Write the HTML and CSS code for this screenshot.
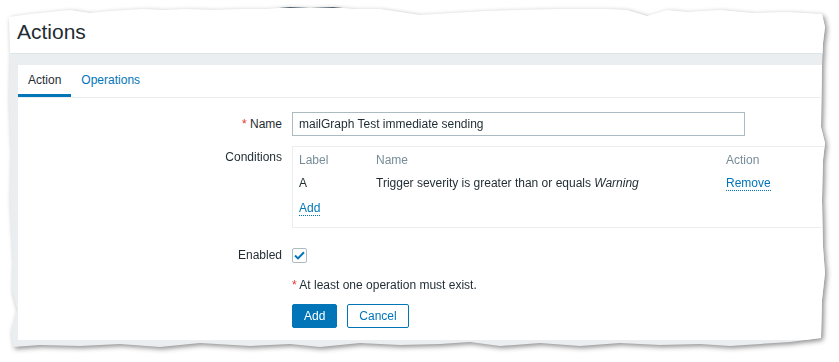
FILE: index.html
```html
<!DOCTYPE html>
<html>

<head>
    <title>Actions</title>
    <link rel="stylesheet" href="styles.css">
</head>

<body>
    <div class="shadow">
        <div class="sheet">
            <div class="topline"></div>
            <header class="header">
                <h1>Actions</h1>
            </header>

            <div class="wrapper">
                <div class="panel">
                    <ul class="tabs">
                        <li class="tab active">Action</li>
                        <li class="tab">Operations</li>
                    </ul>

                    <div class="form-grid">
                        <label class="lbl"><span class="req">*</span> Name</label>
                        <div class="field">
                            <input type="text" class="text-input" value="mailGraph Test immediate sending">
                        </div>

                        <label class="lbl lbl-top">Conditions</label>
                        <div class="field">
                            <div class="cond-box">
                                <table class="cond-table">
                                    <thead>
                                        <tr>
                                            <th class="col-label">Label</th>
                                            <th class="col-name">Name</th>
                                            <th>Action</th>
                                        </tr>
                                    </thead>
                                    <tbody>
                                        <tr>
                                            <td>A</td>
                                            <td>Trigger severity is greater than or equals <em>Warning</em></td>
                                            <td><a class="link">Remove</a></td>
                                        </tr>
                                    </tbody>
                                </table>
                                <div class="add-row"><a class="link">Add</a></div>
                            </div>
                        </div>

                        <label class="lbl row-enabled">Enabled</label>
                        <div class="field row-enabled">
                            <span class="checkbox">
                                <svg width="11" height="9" viewBox="0 0 11 9">
                                    <path d="M1 4.6 L4 7.4 L10 1.2" fill="none" stroke="#0275b8" stroke-width="2"/>
                                </svg>
                            </span>
                        </div>

                        <div></div>
                        <div class="field note"><span class="req">*</span> At least one operation must exist.</div>

                        <div></div>
                        <div class="field buttons">
                            <button class="btn">Add</button>
                            <button class="btn btn-alt">Cancel</button>
                        </div>
                    </div>
                </div>
            </div>
        </div>
    </div>
</body>

</html>
```

FILE: styles.css
```css
body {
    margin: 0;
    background: #ffffff;
    font-family: "Liberation Sans", Arial, sans-serif;
    font-size: 12px;
    color: #1f2c33;
    overflow: hidden;
}

/* torn paper look */
.shadow {
    width: 839px;
    height: 362px;
    filter: drop-shadow(2px 2px 2.5px rgba(0, 0, 0, 0.45));
}

.sheet {
    width: 839px;
    height: 362px;
    background: #ebeef0;
    clip-path: polygon(9px 17px, 30px 14px, 60px 11px, 70px 10px, 90px 13px, 110px 11px, 143px 9px, 165px 10px, 185px 9px, 215px 10px, 240px 9px, 267px 9px, 290px 7px, 310px 8px, 333px 7px, 353px 9px, 380px 9px, 420px 15px, 453px 13px, 486px 11px, 520px 10px, 560px 9px, 607px 9px, 627px 10px, 647px 16px, 667px 10px, 687px 12px, 720px 10px, 753px 13px, 787px 12px, 822px 14px, 825px 27px, 823px 43px, 822px 67px, 821px 127px, 825px 143px, 823px 160px, 822px 200px, 823px 247px, 825px 273px, 822px 300px, 821px 338px, 790px 342px, 760px 344px, 730px 346px, 700px 344px, 660px 345px, 620px 343px, 580px 346px, 540px 343px, 500px 346px, 470px 342px, 440px 344px, 400px 345px, 360px 343px, 320px 347px, 290px 344px, 250px 346px, 200px 343px, 160px 347px, 120px 344px, 80px 346px, 40px 345px, 13px 347px, 11px 330px, 17px 310px, 12px 290px, 13px 260px, 10px 200px, 11px 150px, 9px 100px, 10px 50px);
}

.topline {
    height: 8px;
    background: #4f5f6b;
}

.header {
    height: 45px;
    background: #ffffff;
    border-bottom: 1px solid #dfe4e7;
    padding-left: 17px;
}

.header h1 {
    margin: 0;
    padding-top: 12px;
    font-size: 21px;
    line-height: 24px;
    font-weight: normal;
    color: #1f2c33;
}

.wrapper {
    padding: 11px 0 0 18px;
}

.panel {
    background: #ffffff;
    padding-bottom: 12px;
}

.tabs {
    display: flex;
    margin: 0;
    padding: 0;
    list-style: none;
    border-bottom: 1px solid #ebeef0;
}

.tab {
    height: 27px;
    line-height: 27px;
    padding: 2px 10px 0;
    color: #0275b8;
    border-bottom: 3px solid transparent;
}

.tab.active {
    color: #1f2c33;
    border-bottom-color: #0275b8;
}

.form-grid {
    display: grid;
    grid-template-columns: 264px 1fr;
    column-gap: 10px;
    row-gap: 10px;
    padding-top: 14px;
}

.lbl {
    text-align: right;
    line-height: 24px;
}

.lbl-top {
    line-height: 14px;
    padding-top: 4px;
}

.req {
    color: #e33734;
}

.text-input {
    box-sizing: border-box;
    width: 453px;
    height: 24px;
    padding: 0 6px;
    border: 1px solid #acbbc2;
    font-family: "Liberation Sans", Arial, sans-serif;
    font-size: 12px;
    color: #1f2c33;
    outline: none;
}

.cond-box {
    width: 540px;
    border: 1px solid #ebeef0;
    padding: 0 6px 12px;
}

.cond-table {
    border-collapse: collapse;
    width: 100%;
}

.cond-table th {
    height: 25px;
    padding: 0;
    text-align: left;
    font-weight: normal;
    color: #768d99;
}

.cond-table td {
    height: 22px;
    padding: 0;
}

.col-label {
    width: 77px;
}

.col-name {
    width: 350px;
}

.add-row {
    padding-top: 7px;
    line-height: 14px;
}

.link {
    color: #0275b8;
    border-bottom: 1px dotted #0275b8;
    cursor: pointer;
}

.row-enabled {
    margin-top: 5px;
    height: 24px;
    display: flex;
    align-items: center;
}

label.row-enabled {
    justify-content: flex-end;
}

.checkbox {
    box-sizing: border-box;
    width: 15px;
    height: 15px;
    border: 1px solid #acbbc2;
    border-radius: 2px;
    display: flex;
    align-items: center;
    justify-content: center;
}

.note {
    line-height: 18px;
    margin-top: -1px;
}

.buttons {
    display: flex;
    gap: 10px;
}

.btn {
    height: 24px;
    padding: 0 11px;
    background: #0275b8;
    color: #ffffff;
    border: 1px solid #0275b8;
    border-radius: 2px;
    font-family: "Liberation Sans", Arial, sans-serif;
    font-size: 12px;
    cursor: pointer;
}

.btn-alt {
    background: #ffffff;
    color: #0275b8;
}
```
